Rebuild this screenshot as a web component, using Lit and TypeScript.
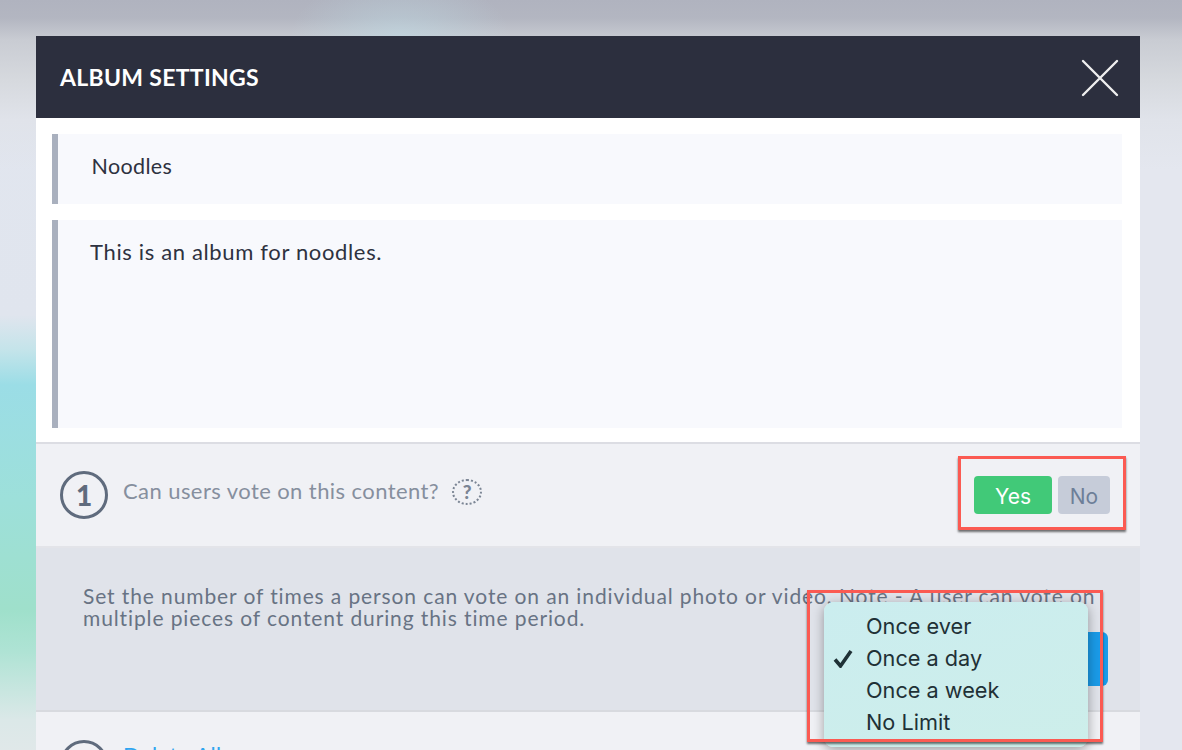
import { LitElement, html, css } from "lit";
import { customElement } from "lit/decorators.js";

@customElement("app-root")
export class AppRoot extends LitElement {
  static styles = css`
    :host {
      display: block;
      width: 1182px;
      height: 750px;
      overflow: hidden;
      position: relative;
      font-family: "Lato", "Open Sans", sans-serif;
      background:
        radial-gradient(ellipse 110px 60px at 400px 36px, rgba(190,218,228,.55), rgba(190,218,228,0)),
        linear-gradient(180deg, #b0b3bf 0, #b3b6c1 18px, #c9ccd3 40px, #d6d9de 80px, #e0e3ea 120px, rgba(226,230,239,0) 170px),
        linear-gradient(90deg, rgba(255,255,255,0) 0, rgba(255,255,255,0) 36px, #e4e7ef 37px),
        linear-gradient(180deg, #e2e6ef 0, #e0e5ee 315px, #c4e4ea 350px, #9bdde6 385px, #9de0da 500px, #9fe0cb 610px, #aee3d4 650px, #dbe8e8 720px, #e0e8e9 750px);
    }
    .modal {
      margin: 36px 42px 0 36px;
      width: 1104px;
    }
    .header {
      height: 82px;
      background: #2c2f3e;
      display: flex;
      align-items: center;
      justify-content: space-between;
      padding: 0 20px 0 24px;
      box-sizing: border-box;
    }
    .title {
      color: #fff;
      font-weight: 700;
      font-size: 23px;
      letter-spacing: 0.3px;
    }
    .close { display: block; width: 40px; height: 40px; }
    .top {
      background: #fff;
      padding: 16px 18px 14px 16px;
      display: flex;
      flex-direction: column;
      gap: 16px;
    }
    .field {
      background: #f8f9fd;
      border-left: 6px solid #a9b0be;
      color: #2e3240;
    }
    .name {
      height: 70px;
      padding: 19px 0 0 33.5px;
      box-sizing: border-box;
      line-height: 26px;
      font-size: 21.5px;
      letter-spacing: 0.35px;
    }
    .desc {
      height: 208px;
      padding: 19px 0 0 32px;
      box-sizing: border-box;
      line-height: 26px;
      font-size: 22px;
      letter-spacing: 0.65px;
    }
    .row {
      background: #f0f1f5;
      border-top: 2px solid #dcdde3;
      height: 104px;
      box-sizing: border-box;
      display: flex;
      align-items: center;
      padding: 0 30px 0 24px;
    }
    .num {
      width: 48px;
      height: 48px;
      box-sizing: border-box;
      border: 3.5px solid #5f6b7d;
      border-radius: 50%;
      display: flex;
      align-items: center;
      justify-content: center;
      color: #5f6b7d;
      font-weight: 900;
      font-size: 28px;
      flex: none;
    }
    .q {
      margin: -10px 0 0 15px;
      color: #868f9e;
      font-size: 22px;
      letter-spacing: 0.42px;
    }
    .help {
      margin: -7px 0 0 13px;
      width: 30px;
      height: 26px;
      box-sizing: border-box;
      border: 2px dotted #7b8594;
      border-radius: 50%;
      display: flex;
      align-items: center;
      justify-content: center;
      color: #7b8594;
      font: 900 19px "Lato", sans-serif;
    }
    .toggle { margin-left: auto; display: flex; gap: 6px; }
    .btn {
      height: 38px;
      box-sizing: border-box;
      padding-top: 2px;
      border-radius: 4px;
      display: flex;
      align-items: center;
      justify-content: center;
      font-family: "Inter", sans-serif;
      font-size: 21px;
    }
    .yes { width: 78px; background: #41c978; color: #fff; }
    .no { width: 52px; background: #c6ccd9; color: #6d7f98; }
    .limit {
      background: #e0e3ea;
      height: 164px;
      box-sizing: border-box;
      border-top: 2px solid #e3e4e9;
      padding: 37px 32px 0 47px;
      display: flex;
      flex-direction: column;
    }
    .limit p {
      margin: 0;
      color: #687384;
      font-size: 21px;
      line-height: 22px;
      letter-spacing: 0.89px;
    }
    .limit-btn {
      align-self: flex-end;
      margin-top: 3px;
      width: 120px;
      height: 54px;
      background: #1a9be8;
      border-radius: 6px;
    }
    .foot {
      background: #f0f1f5;
      height: 60px;
      border-top: 2px solid #d8dadf;
      box-sizing: border-box;
      display: flex;
      padding: 28px 30px 0 24px;
    }
    .del {
      margin: 2px 0 0 15px;
      color: #2fa5f0;
      font-size: 22px;
      letter-spacing: 0.42px;
      line-height: 26px;
    }
    .mark {
      position: absolute;
      box-sizing: border-box;
      border: 3px solid #fb5a52;
      box-shadow: 0 2px 2px rgba(0,0,0,.55);
      pointer-events: none;
    }
    .m1 { left: 958px; top: 456px; width: 168px; height: 74px; }
    .m2 { left: 807px; top: 590px; width: 296px; height: 152px; }
    .menu {
      position: absolute;
      left: 824px;
      top: 602px;
      width: 264px;
      height: 145px;
      box-sizing: border-box;
      border-radius: 9px;
      background: linear-gradient(160deg, #cbedef, #cdeeea);
      box-shadow: 0 3px 12px rgba(0,0,0,.35);
      padding: 8px 0 0 42px;
      font-family: "Inter", sans-serif;
      font-size: 21.7px;
      color: #1f3136;
    }
    .opt { height: 32px; line-height: 32px; position: relative; }
    .check { position: absolute; left: -33px; top: 7px; width: 20px; height: 19px; }
  `;

  render() {
    return html`
      <div class="modal">
        <div class="header">
          <div class="title">ALBUM SETTINGS</div>
          <svg class="close" viewBox="0 0 40 40">
            <path d="M3 4L37 38M37 4L3 38" stroke="#efefef" stroke-width="2.4" stroke-linecap="round" fill="none" />
          </svg>
        </div>
        <div class="top">
          <div class="field name">Noodles</div>
          <div class="field desc">This is an album for noodles.</div>
        </div>
        <div class="row">
          <div class="num">1</div>
          <div class="q">Can users vote on this content?</div>
          <div class="help">?</div>
          <div class="toggle">
            <div class="btn yes">Yes</div>
            <div class="btn no">No</div>
          </div>
        </div>
        <div class="limit">
          <p>Set the number of times a person can vote on an individual photo or video. Note - A user can vote on multiple pieces of content during this time period.</p>
          <div class="limit-btn"></div>
        </div>
        <div class="foot">
          <div class="num">2</div>
          <div class="del">Delete Album</div>
        </div>
      </div>
      <div class="mark m1"></div>
      <div class="menu">
        <div class="opt">Once ever</div>
        <div class="opt">
          <svg class="check" viewBox="0 0 20 19"><path d="M2 10.5L7.5 17L18 2" fill="none" stroke="#1f3136" stroke-width="3.6" /></svg>
          Once a day
        </div>
        <div class="opt">Once a week</div>
        <div class="opt">No Limit</div>
      </div>
      <div class="mark m2"></div>
    `;
  }
}
